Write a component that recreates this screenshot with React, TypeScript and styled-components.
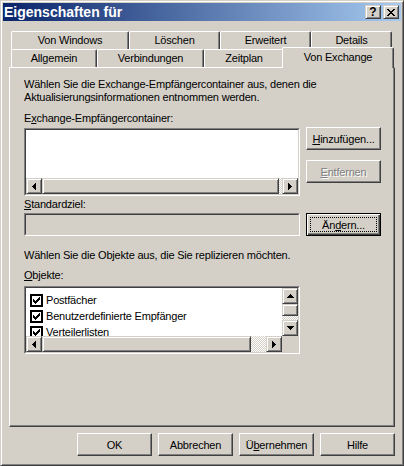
import React from 'react';
import styled, { createGlobalStyle, css } from 'styled-components';

const face = '#d4d0c8';
const light = '#ffffff';
const shadow = '#808080';
const dark = '#404040';

const GlobalStyle = createGlobalStyle`
    html, body {
        margin: 0;
        padding: 0;
        background: ${face};
    }
    body {
        font-family: "Liberation Sans", Arial, sans-serif;
        font-size: 11px;
        color: #000;
    }
`;

const raised = css`
    border: 1px solid;
    border-color: ${light} ${dark} ${dark} ${light};
    box-shadow: inset -1px -1px ${shadow};
`;

const smallRaised = css`
    border: 1px solid;
    border-color: ${face} ${dark} ${dark} ${face};
    box-shadow: inset 1px 1px ${light}, inset -1px -1px ${shadow};
`;

const dither = css`
    background: repeating-conic-gradient(${light} 0 25%, ${face} 0 50%) 0 0 / 2px 2px;
`;

const Window = styled.div`
    width: 404px;
    height: 466px;
    box-sizing: border-box;
    border: 1px solid;
    border-color: ${face} ${dark} ${dark} ${face};
    box-shadow: inset 1px 1px ${light}, inset -1px -1px ${shadow};
    padding: 2px;
    display: flex;
    flex-direction: column;
    letter-spacing: -0.2px;
`;

const TitleBar = styled.div`
    height: 18px;
    flex: none;
    display: flex;
    align-items: center;
    padding: 0 2px 0 1px;
    background: linear-gradient(to right, #0a246a, #a6caf0);
    color: #fff;
    font-weight: bold;
    letter-spacing: 0;
`;

const Title = styled.div`
    flex: 1;
    font-size: 14px;
    line-height: 16px;
`;

const TitleButton = styled.div`
    width: 16px;
    height: 14px;
    box-sizing: border-box;
    ${smallRaised};
    background: ${face};
    color: #000;
    display: flex;
    align-items: center;
    justify-content: center;
    font-size: 12px;
    font-weight: bold;
    line-height: 12px;
    & + & {
        margin-left: 2px;
    }
`;

const Tabs = styled.div`
    margin-top: 10px;
    flex: none;
`;

const TabRow = styled.div`
    display: flex;
    height: 18px;
    padding-left: 8px;
`;

const Tab = styled.div<{ $w: number; $active?: boolean }>`
    width: ${(p) => p.$w}px;
    box-sizing: border-box;
    height: 18px;
    border-top: 1px solid ${light};
    border-left: 1px solid ${light};
    border-right: 1px solid ${dark};
    box-shadow: inset -1px 0 ${shadow};
    border-radius: 2px 2px 0 0;
    background: ${face};
    text-align: center;
    padding-top: 2px;
    line-height: 13px;
    white-space: nowrap;

    ${(p) =>
        p.$active &&
        css`
            position: relative;
            z-index: 2;
            margin: -2px -2px 0;
            height: 21px;
            width: ${p.$w + 4}px;
            padding-top: 3px;
        `}
`;

const Panel = styled.div`
    margin: 0 6px 0 6px;
    height: 360px;
    box-sizing: border-box;
    border: 1px solid;
    border-color: ${light} ${dark} ${dark} ${light};
    box-shadow: inset -1px -1px ${shadow};
    padding: 10px 0 0 14px;
    flex: none;
`;

const Text = styled.div<{ $mt?: number }>`
    line-height: 13px;
    margin-top: ${(p) => p.$mt || 0}px;
    white-space: nowrap;
`;

const U = styled.span`
    text-decoration: underline;
    text-underline-offset: 1px;
`;

const Row = styled.div<{ $mt: number }>`
    display: flex;
    align-items: flex-start;
    margin-top: ${(p) => p.$mt}px;
`;

const Column = styled.div`
    display: flex;
    flex-direction: column;
    gap: 10px;
    margin-left: 6px;
`;

const Sunken = styled.div<{ $w: number; $h: number; $mt?: number }>`
    width: ${(p) => p.$w}px;
    height: ${(p) => p.$h}px;
    margin-top: ${(p) => p.$mt || 0}px;
    box-sizing: border-box;
    border: 1px solid;
    border-color: ${shadow} ${light} ${light} ${shadow};
    flex: none;
`;

const SunkenInner = styled.div<{ $bg?: string }>`
    height: 100%;
    box-sizing: border-box;
    border: 1px solid;
    border-color: ${dark} ${face} ${face} ${dark};
    background: ${(p) => p.$bg || '#fff'};
    display: flex;
    flex-direction: column;
`;

const ListGrid = styled.div`
    height: 100%;
    box-sizing: border-box;
    border: 1px solid;
    border-color: ${dark} ${face} ${face} ${dark};
    background: #fff;
    display: grid;
    grid-template-columns: 1fr 16px;
    grid-template-rows: 1fr 16px;
    overflow: hidden;
`;

const Items = styled.div`
    padding: 4px 0 0 4px;
    overflow: hidden;
    min-height: 0;
`;

const Item = styled.div`
    display: flex;
    align-items: center;
    height: 16px;
    white-space: nowrap;
    svg {
        flex: none;
        margin-right: 3px;
    }
`;

const Corner = styled.div`
    background: ${face};
`;

const Spacer = styled.div`
    flex: 1;
`;

const HScroll = styled.div`
    display: flex;
    height: 16px;
    flex: none;
`;

const VScroll = styled.div`
    display: flex;
    flex-direction: column;
    width: 16px;
`;

const ScrollBtn = styled.div`
    width: 16px;
    height: 16px;
    box-sizing: border-box;
    ${smallRaised};
    background: ${face};
    display: flex;
    align-items: center;
    justify-content: center;
    flex: none;
`;

const Thumb = styled.div<{ $size: number; $vertical?: boolean }>`
    ${smallRaised};
    box-sizing: border-box;
    background: ${face};
    flex: none;
    ${(p) => (p.$vertical ? `height: ${p.$size}px;` : `width: ${p.$size}px;`)}
`;

const Track = styled.div`
    flex: 1;
    ${dither};
`;

const Button = styled.button<{ $default?: boolean }>`
    position: relative;
    width: 75px;
    height: 23px;
    box-sizing: border-box;
    padding: 0;
    margin: 0;
    font: inherit;
    letter-spacing: inherit;
    color: #000;
    background: ${face};
    ${raised};
    flex: none;
    cursor: default;

    &:disabled {
        color: ${shadow};
        text-shadow: 1px 1px 0 ${light};
    }

    ${(p) =>
        p.$default &&
        css`
            border: 1px solid #000;
            box-shadow: inset 1px 1px ${light}, inset -1px -1px ${dark}, inset -2px -2px ${shadow};
            &::after {
                content: '';
                position: absolute;
                inset: 3px;
                border: 1px dotted #000;
            }
        `}
`;

const Footer = styled.div`
    display: flex;
    justify-content: flex-end;
    gap: 6px;
    margin: 6px 6px 0 0;
`;

const Arrow = ({ dir }: { dir: 'left' | 'right' | 'up' | 'down' }) => {
    const paths = {
        left: 'M0 3h1v1H0zM1 2h1v3H1zM2 1h1v5H2zM3 0h1v7H3z',
        right: 'M0 0h1v7H0zM1 1h1v5H1zM2 2h1v3H2zM3 3h1v1H3z',
        up: 'M3 0h1v1H3zM2 1h3v1H2zM1 2h5v1H1zM0 3h7v1H0z',
        down: 'M0 0h7v1H0zM1 1h5v1H1zM2 2h3v1H2zM3 3h1v1H3z',
    };
    const horiz = dir === 'left' || dir === 'right';
    return (
        <svg width={horiz ? 4 : 7} height={horiz ? 7 : 4} shapeRendering="crispEdges">
            <path d={paths[dir]} fill="#000" />
        </svg>
    );
};

const Check = () => (
    <svg width="13" height="13" shapeRendering="crispEdges">
        <rect x="0" y="0" width="13" height="13" fill="#000" />
        <rect x="2" y="2" width="9" height="9" fill="#fff" />
        <path
            d="M3 5h1v3H3zM4 6h1v3H4zM5 7h1v3H5zM6 6h1v3H6zM7 5h1v3H7zM8 4h1v3H8zM9 3h1v3H9z"
            fill="#000"
        />
    </svg>
);

const CloseGlyph = () => (
    <svg width="8" height="7" shapeRendering="crispEdges">
        <path
            d="M0 0h2v1H0zM6 0h2v1H6zM1 1h2v1H1zM5 1h2v1H5zM2 2h4v1H2zM3 3h2v1H3zM2 4h4v1H2zM1 5h2v1H1zM5 5h2v1H5zM0 6h2v1H0zM6 6h2v1H6z"
            fill="#000"
        />
    </svg>
);

const topTabs = [
    { label: 'Von Windows', w: 118 },
    { label: 'Löschen', w: 91 },
    { label: 'Erweitert', w: 91 },
    { label: 'Details', w: 81 },
];

const bottomTabs = [
    { label: 'Allgemein', w: 86 },
    { label: 'Verbindungen', w: 107 },
    { label: 'Zeitplan', w: 80 },
    { label: 'Von Exchange', w: 108, active: true },
];

const objects = ['Postfächer', 'Benutzerdefinierte Empfänger', 'Verteilerlisten'];

export default function App() {
    return (
        <>
            <GlobalStyle />
            <Window>
                <TitleBar>
                    <Title>Eigenschaften für</Title>
                    <TitleButton>?</TitleButton>
                    <TitleButton>
                        <CloseGlyph />
                    </TitleButton>
                </TitleBar>

                <Tabs>
                    <TabRow>
                        {topTabs.map((t) => (
                            <Tab key={t.label} $w={t.w}>
                                {t.label}
                            </Tab>
                        ))}
                    </TabRow>
                    <TabRow>
                        {bottomTabs.map((t) => (
                            <Tab key={t.label} $w={t.w} $active={t.active}>
                                {t.label}
                            </Tab>
                        ))}
                    </TabRow>
                </Tabs>

                <Panel>
                    <Text>Wählen Sie die Exchange-Empfängercontainer aus, denen die</Text>
                    <Text>Aktualisierungsinformationen entnommen werden.</Text>

                    <Text $mt={8}>
                        E<U>x</U>change-Empfängercontainer:
                    </Text>
                    <Row $mt={2}>
                        <Sunken $w={276} $h={68} $mt={1}>
                            <SunkenInner>
                                <Spacer />
                                <HScroll>
                                    <ScrollBtn>
                                        <Arrow dir="left" />
                                    </ScrollBtn>
                                    <Thumb $size={237} />
                                    <Track />
                                    <ScrollBtn>
                                        <Arrow dir="right" />
                                    </ScrollBtn>
                                </HScroll>
                            </SunkenInner>
                        </Sunken>
                        <Column>
                            <Button>
                                <U>H</U>inzufügen...
                            </Button>
                            <Button disabled>
                                <U>E</U>ntfernen
                            </Button>
                        </Column>
                    </Row>

                    <Text $mt={2}>
                        <U>S</U>tandardziel:
                    </Text>
                    <Row $mt={2}>
                        <Sunken $w={276} $h={23}>
                            <SunkenInner $bg={face} />
                        </Sunken>
                        <Column>
                            <Button $default>
                                Än<U>d</U>ern...
                            </Button>
                        </Column>
                    </Row>

                    <Text $mt={13}>Wählen Sie die Objekte aus, die Sie replizieren möchten.</Text>
                    <Text $mt={7}>
                        <U>O</U>bjekte:
                    </Text>
                    <Sunken $w={276} $h={68} $mt={4}>
                        <ListGrid>
                            <Items>
                                {objects.map((o) => (
                                    <Item key={o}>
                                        <Check />
                                        {o}
                                    </Item>
                                ))}
                            </Items>
                            <VScroll>
                                <ScrollBtn>
                                    <Arrow dir="up" />
                                </ScrollBtn>
                                <Thumb $vertical $size={12} />
                                <Track />
                                <ScrollBtn>
                                    <Arrow dir="down" />
                                </ScrollBtn>
                            </VScroll>
                            <HScroll>
                                <ScrollBtn>
                                    <Arrow dir="left" />
                                </ScrollBtn>
                                <Thumb $size={209} />
                                <Track />
                                <ScrollBtn>
                                    <Arrow dir="right" />
                                </ScrollBtn>
                            </HScroll>
                            <Corner />
                        </ListGrid>
                    </Sunken>
                </Panel>

                <Footer>
                    <Button>OK</Button>
                    <Button>Abbrechen</Button>
                    <Button>
                        Ü<U>b</U>ernehmen
                    </Button>
                    <Button>Hilfe</Button>
                </Footer>
            </Window>
        </>
    );
}
